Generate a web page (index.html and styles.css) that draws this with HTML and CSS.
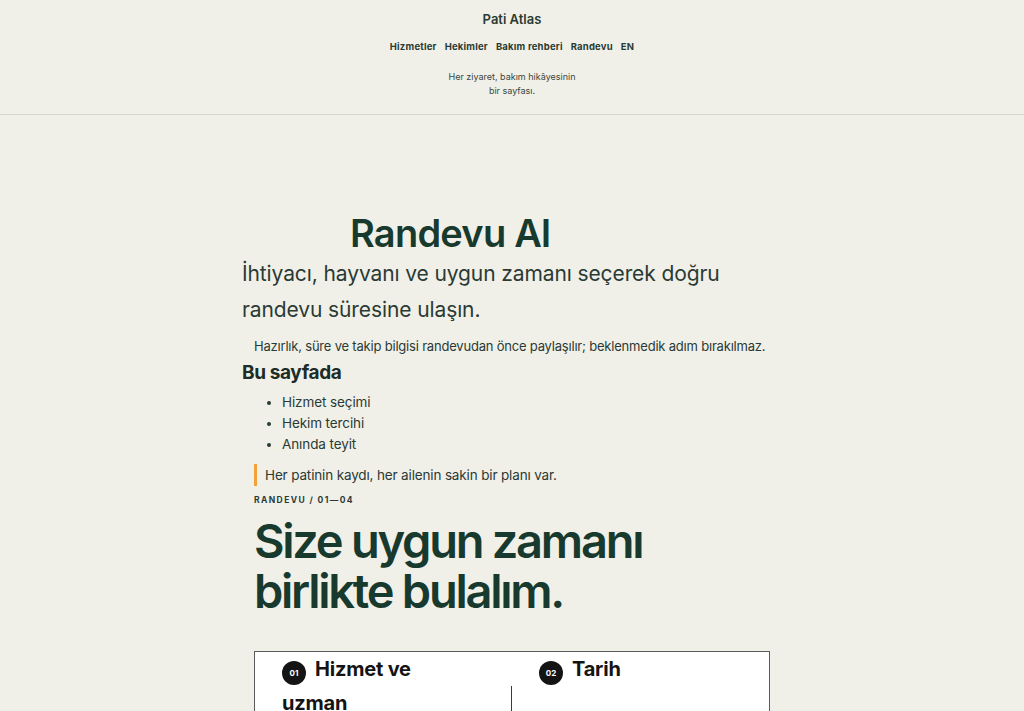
FILE: index.html
```html
<!DOCTYPE html>
<html lang="tr">
<head>
<meta charset="utf-8">
<title>Randevu Al — Pati Atlas</title>
<link rel="stylesheet" href="styles.css">
</head>
<body>
<header class="site-header">
  <div class="brand">Pati Atlas</div>
  <nav class="nav">
    <a href="#">Hizmetler</a>
    <a href="#">Hekimler</a>
    <a href="#">Bakım rehberi</a>
    <a href="#">Randevu</a>
    <a href="#">EN</a>
  </nav>
  <p class="tagline">Her ziyaret, bakım hikâyesinin bir sayfası.</p>
</header>
<main class="main">
  <h1 class="page-title">Randevu Al</h1>
  <p class="lead">İhtiyacı, hayvanı ve uygun zamanı seçerek doğru randevu süresine ulaşın.</p>
  <p class="note">Hazırlık, süre ve takip bilgisi randevudan önce paylaşılır; beklenmedik adım bırakılmaz.</p>
  <h2 class="toc-title">Bu sayfada</h2>
  <ul class="toc">
    <li>Hizmet seçimi</li>
    <li>Hekim tercihi</li>
    <li>Anında teyit</li>
  </ul>
  <blockquote class="quote">Her patinin kaydı, her ailenin sakin bir planı var.</blockquote>
  <div class="eyebrow">RANDEVU / 01—04</div>
  <h2 class="hero">Size uygun zamanı birlikte bulalım.</h2>
  <section class="card">
    <div class="col">
      <h3 class="step"><span class="badge">01</span>Hizmet ve uzman</h3>
    </div>
    <div class="col">
      <h3 class="step"><span class="badge">02</span>Tarih</h3>
      <div class="col-body"></div>
    </div>
  </section>
</main>
</body>
</html>
```

FILE: styles.css
```css
html, body {
  margin: 0;
  padding: 0;
  background: #f1f0e8;
  color: #1f3a31;
  font-family: "Inter", "Noto Sans", sans-serif;
}

.site-header {
  text-align: center;
  padding: 10px 0 16px;
  border-bottom: 1px solid #d6d5cd;
}

.brand {
  font-size: 13px;
  line-height: 18px;
  font-weight: 600;
  color: #2a3b34;
}

.nav {
  margin-top: 12px;
  display: flex;
  justify-content: center;
  gap: 8px;
  line-height: 14px;
}

.nav a {
  font-size: 9.5px;
  font-weight: 700;
  letter-spacing: 0.2px;
  color: #2a3b34;
  text-decoration: none;
}

.tagline {
  margin: 16px auto 0;
  max-width: 132px;
  font-size: 9px;
  line-height: 14px;
  color: #3b4741;
}

.main {
  max-width: 528px;
  margin: 0 auto;
  padding: 95px 12px 0 0;
}

.page-title {
  margin: 0 0 0 108px;
  font-size: 38px;
  line-height: 46px;
  font-weight: 600;
  letter-spacing: -0.02em;
  color: #183a2e;
}

.lead {
  margin: 0;
  max-width: 490px;
  font-size: 21px;
  line-height: 36px;
  font-weight: 400;
  letter-spacing: -0.005em;
  color: #2a3a35;
}

.note {
  margin: 8px 0 0 12px;
  font-size: 13px;
  line-height: 20px;
  letter-spacing: -0.2px;
  white-space: nowrap;
  color: #2a3a35;
}

.toc-title {
  margin: 5px 0 0;
  font-size: 19px;
  line-height: 24px;
  font-weight: 700;
  letter-spacing: -0.02em;
  color: #1c2c27;
}

.toc {
  margin: 7px 0 0;
  padding-left: 40px;
  font-size: 13.5px;
  line-height: 21px;
  letter-spacing: -0.1px;
  color: #2a3a35;
}

.quote {
  margin: 9px 0 0 12px;
  padding: 1px 0 1px 8px;
  border-left: 3px solid #f1a23a;
  font-size: 13.5px;
  line-height: 20px;
  letter-spacing: -0.15px;
  color: #2a3a35;
}

.eyebrow {
  margin: 8px 0 0 12px;
  font-size: 8.5px;
  line-height: 12px;
  font-weight: 700;
  letter-spacing: 1.4px;
  color: #2a3a35;
}

.hero {
  margin: 10px 0 0 12px;
  font-size: 47px;
  line-height: 50px;
  font-weight: 600;
  letter-spacing: -0.048em;
  color: #183a2e;
}

.card {
  margin: 35px 0 0 12px;
  background: #ffffff;
  border: 1px solid #5b5b5b;
  display: grid;
  grid-template-columns: 1fr 1fr;
  min-height: 120px;
}

.col {
  display: flex;
  flex-direction: column;
}

.step {
  margin: 0;
  padding: 0 40px 0 27px;
  font-size: 20px;
  line-height: 34px;
  font-weight: 700;
  letter-spacing: -0.01em;
  color: #141414;
}

.badge {
  display: inline-block;
  width: 24px;
  height: 24px;
  margin-right: 9px;
  border-radius: 50%;
  background: #141414;
  color: #ffffff;
  font-size: 8px;
  line-height: 24px;
  font-weight: 700;
  text-align: center;
  letter-spacing: 0;
  vertical-align: 0;
}

.col-body {
  flex: 1;
  border-left: 1px solid #3a3a3a;
  margin-left: -1px;
}
```
